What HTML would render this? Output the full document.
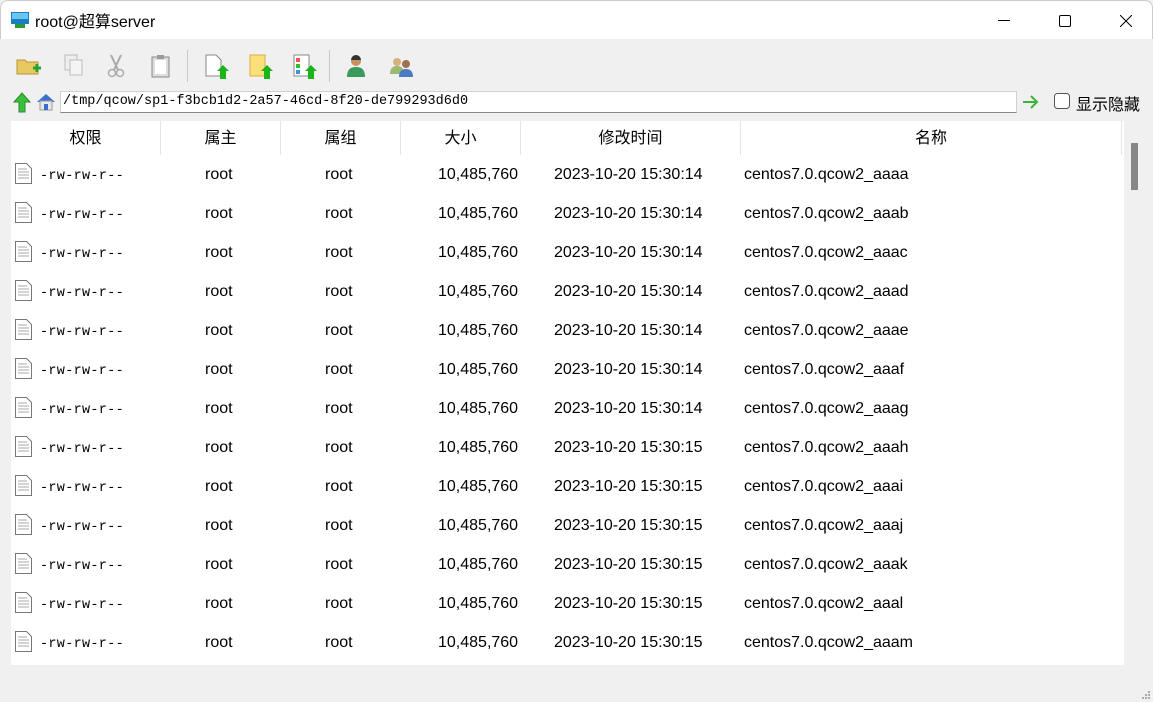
<!DOCTYPE html>
<html><head><meta charset="utf-8"><style>
*{margin:0;padding:0;box-sizing:border-box}
body{width:1153px;height:702px;background:#f0f0f0;font-family:"Liberation Sans","Noto Sans CJK SC",sans-serif;position:relative;overflow:hidden;color:#000}
.title{position:absolute;left:0;top:0;width:1153px;height:39px;background:#fff;border:1px solid #ccc;border-bottom:none;border-radius:8px 8px 0 0}
.title .t{position:absolute;left:34px;top:7px;font-size:16px}
.tb{position:absolute;top:0}
.sep{position:absolute;top:50px;width:1px;height:32px;background:#c8c8c8}
.addr{position:absolute;left:60px;top:91px;width:957px;height:22px;background:#fff;border:1px solid #d0d0d0;border-bottom:1px solid #888;font-family:"Liberation Mono",monospace;font-size:13.5px;padding:2px 2px;}
.list{position:absolute;left:11px;top:121px;width:1113px;height:544px;background:#fff;overflow:hidden}
.hd{position:absolute;top:0;height:34px;font-size:16px;text-align:center;line-height:36px;border-right:1px solid #e5e5e5}
.row{position:absolute;left:0;height:39px;width:1113px;font-size:16px}
.row span{position:absolute;top:0;line-height:36px}
.row span.perm{font-family:"Liberation Mono",monospace;font-size:13.5px;left:29px;top:2px;letter-spacing:.3px}
.sb{position:absolute;left:1131px;top:143px;width:7px;height:47px;background:#868686}
</style></head><body>
<div class="title">
<svg style="position:absolute;left:10px;top:11px" width="18" height="17"><rect x="0" y="0" width="18" height="12" fill="#1a7fc4"/><rect x="1" y="1" width="16" height="6" fill="#6cc4f0"/><rect x="4" y="12" width="10" height="4" fill="#2a9a3a"/></svg>
<div class="t">root@超算server</div>
<svg style="position:absolute;left:997px;top:19px" width="12" height="2"><rect width="12" height="1" fill="#000"/></svg>
<svg style="position:absolute;left:1058px;top:14px" width="12" height="12"><rect x=".5" y=".5" width="11" height="11" rx="1.5" fill="none" stroke="#000"/></svg>
<svg style="position:absolute;left:1119px;top:14px" width="12" height="12"><path d="M0 0L12 12M12 0L0 12" stroke="#000"/></svg>
</div>
<svg class="tb" style="left:16px;top:56px" width="26" height="22"><path d="M1 4h8l2 2h11v12H1z" fill="#e8c860" stroke="#b8953a"/><path d="M17 12h8M21 8v8" stroke="#2ca02c" stroke-width="3"/></svg>
<svg class="tb" style="left:64px;top:54px" width="20" height="24"><rect x="1" y="1" width="12" height="15" fill="#eee" stroke="#bbb"/><rect x="6" y="6" width="12" height="15" fill="#f4f4f4" stroke="#bbb"/></svg>
<svg class="tb" style="left:107px;top:54px" width="18" height="24"><path d="M4 1L11 16M14 1L7 16" stroke="#aaa" stroke-width="2"/><circle cx="5" cy="19" r="3.5" fill="none" stroke="#aaa" stroke-width="1.5"/><circle cx="13" cy="19" r="3.5" fill="none" stroke="#aaa" stroke-width="1.5"/></svg>
<svg class="tb" style="left:151px;top:54px" width="20" height="24"><rect x="1" y="3" width="17" height="20" fill="#ddd" stroke="#888"/><rect x="4" y="6" width="11" height="14" fill="#fff"/><rect x="6" y="1" width="7" height="4" fill="#999"/></svg>
<div class="sep" style="left:187px"></div>
<svg class="tb" style="left:205px;top:54px" width="24" height="26"><path d="M1 1h10l5 5v16H1z" fill="#fff" stroke="#888"/><path d="M15 25V17h-3l6-6 6 6h-3v8z" fill="#1bb51b"/></svg>
<svg class="tb" style="left:249px;top:54px" width="24" height="26"><rect x="1" y="1" width="15" height="21" fill="#fbe07a" stroke="#d4b040"/><path d="M15 25V17h-3l6-6 6 6h-3v8z" fill="#1bb51b"/></svg>
<svg class="tb" style="left:293px;top:54px" width="24" height="26"><rect x="1" y="1" width="15" height="21" fill="#fff" stroke="#888"/><rect x="3" y="4" width="4" height="4" fill="#e55"/><rect x="3" y="10" width="4" height="4" fill="#3b3"/><rect x="3" y="16" width="4" height="4" fill="#39d"/><path d="M15 25V17h-3l6-6 6 6h-3v8z" fill="#1bb51b"/></svg>
<div class="sep" style="left:329px"></div>
<svg class="tb" style="left:345px;top:54px" width="22" height="24"><circle cx="11" cy="7" r="5" fill="#c89060"/><path d="M6 6a5 5 0 0 1 10 0" fill="#333"/><path d="M2 23c0-8 4-10 9-10s9 2 9 10z" fill="#3a9a5a"/></svg>
<svg class="tb" style="left:389px;top:56px" width="26" height="22"><circle cx="8" cy="6" r="4" fill="#d8b080"/><path d="M1 18c0-6 3-8 7-8s7 2 7 8z" fill="#9aba70"/><circle cx="17" cy="8" r="4" fill="#a07050"/><path d="M10 21c0-6 3-8 7-8s7 2 7 8z" fill="#4a7ac0"/></svg>
<svg class="tb" style="left:12px;top:91px" width="20" height="22"><path d="M7 21V11H2L10 2l8 9h-5v10z" fill="#3cc03c" stroke="#2a8a2a"/></svg>
<svg class="tb" style="left:35px;top:92px" width="22" height="20"><path d="M2 10L11 2l9 8" fill="#3a6fd0"/><rect x="5" y="9" width="12" height="9" fill="#e8e8e8" stroke="#999"/><rect x="9" y="12" width="4" height="6" fill="#3a6fd0"/></svg>
<div class="addr">/tmp/qcow/sp1-f3bcb1d2-2a57-46cd-8f20-de799293d6d0</div>
<svg class="tb" style="left:1022px;top:95px" width="18" height="14"><path d="M1 7h14M9 1l6 6-6 6" stroke="#3cb43c" stroke-width="2" fill="none"/></svg>
<svg class="tb" style="left:1054px;top:93px" width="17" height="17"><rect x=".5" y=".5" width="15" height="15" rx="3" fill="#fff" stroke="#555"/></svg>
<div style="position:absolute;left:1076px;top:91px;font-size:16px">显示隐藏</div>
<div class="list">
<div class="hd" style="left:0;width:150px">权限</div>
<div class="hd" style="left:150px;width:120px">属主</div>
<div class="hd" style="left:270px;width:120px">属组</div>
<div class="hd" style="left:390px;width:120px">大小</div>
<div class="hd" style="left:510px;width:220px">修改时间</div>
<div class="hd" style="left:730px;width:381px">名称</div>
<div id="rows"></div>
</div>
<div class="sb"></div>
<svg class="tb" style="left:1141px;top:690px" width="10" height="10"><g fill="#aaa"><rect x="7" y="1" width="2" height="2"/><rect x="4" y="4" width="2" height="2"/><rect x="7" y="4" width="2" height="2"/><rect x="1" y="7" width="2" height="2"/><rect x="4" y="7" width="2" height="2"/><rect x="7" y="7" width="2" height="2"/></g></svg>
<script>
var s="abcdefghijklm",h="";
for(var i=0;i<13;i++){var t=i<7?"14":"15";var y=36+i*39;
h+='<div class="row" style="top:'+y+'px"><svg style="position:absolute;left:4px;top:6px" width="18" height="21"><path d="M.5 .5h11l5 5v15H.5z" fill="#fff" stroke="#777"/><path d="M3 6h9M3 9h11M3 12h11M3 15h11" stroke="#aaa"/></svg>'+
'<span class="perm">-rw-rw-r--</span><span style="left:194px">root</span><span style="left:314px">root</span><span style="left:427px">10,485,760</span><span style="left:543px">2023-10-20 15:30:'+t+'</span><span style="left:733px">centos7.0.qcow2_aaa'+s[i]+'</span></div>';}
document.getElementById("rows").innerHTML=h;
</script>
</body></html>
